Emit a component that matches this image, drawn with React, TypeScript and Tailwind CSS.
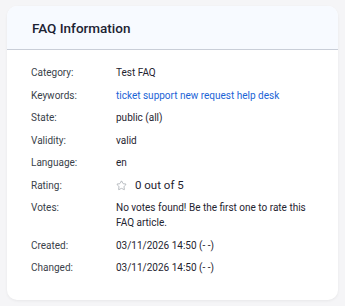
import { Star } from 'lucide-react';

const rows: { label: string; value: React.ReactNode }[] = [
  { label: 'Category:', value: 'Test FAQ' },
  {
    label: 'Keywords:',
    value: <span className="text-[#1b64d6]">ticket support new request help desk</span>,
  },
  { label: 'State:', value: 'public (all)' },
  { label: 'Validity:', value: 'valid' },
  { label: 'Language:', value: 'en' },
  {
    label: 'Rating:',
    value: (
      <span className="flex items-center gap-[8px]">
        <Star className="w-[11px] h-[11px] text-[#9aa0a8]" strokeWidth={1.5} />
        <span className="text-[11.5px]">0 out of 5</span>
      </span>
    ),
  },
  { label: 'Votes:', value: 'No votes found! Be the first one to rate this FAQ article.' },
  { label: 'Created:', value: '03/11/2026 14:50 (- -)' },
  { label: 'Changed:', value: '03/11/2026 14:50 (- -)' },
];

export default function App() {
  return (
    <div
      className="w-[345px] h-[306px] bg-[#f5f5f7] pt-[6px] px-[7px]"
      style={{ fontFamily: 'Roboto, "Liberation Sans", sans-serif' }}
    >
      <div className="w-[331px] h-[294px] bg-white rounded-[10px] shadow-[0_1px_3px_rgba(0,0,0,0.06)] overflow-hidden">
        {/* Header */}
        <div className="h-[44px] bg-[#f7faff] border-b border-[#c9ced8] flex items-center px-[25px]">
          <h2 className="text-[13.5px] font-medium text-[#1c2333] pt-[2px]">FAQ Information</h2>
        </div>

        {/* Details */}
        <div className="pl-[24px] pr-[30px] pt-[15px] flex flex-col gap-[7.5px]">
          {rows.map((r) => (
            <div key={r.label} className="flex text-[10px] leading-[15px]">
              <span className="w-[85px] shrink-0 text-[#3a3f4a]">{r.label}</span>
              <span className="text-[#1f2430] min-h-[15px]">{r.value}</span>
            </div>
          ))}
        </div>
      </div>
    </div>
  );
}
